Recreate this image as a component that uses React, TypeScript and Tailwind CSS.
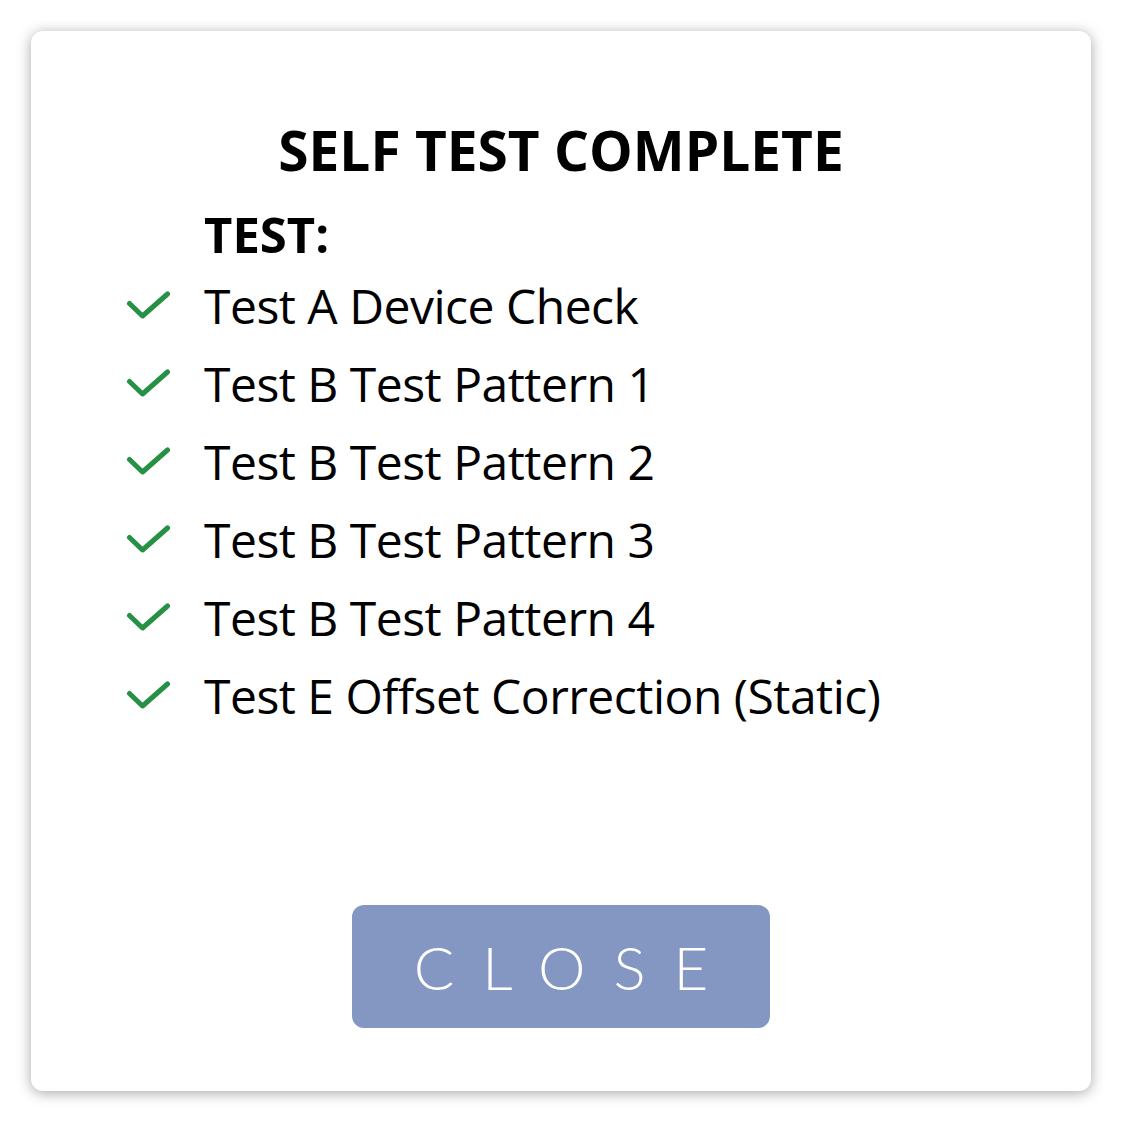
import React from "react";

const tests = [
  "Test A Device Check",
  "Test B Test Pattern 1",
  "Test B Test Pattern 2",
  "Test B Test Pattern 3",
  "Test B Test Pattern 4",
  "Test E Offset Correction (Static)",
];

function Check() {
  return (
    <svg width="46" height="32" viewBox="0 0 46 32" className="shrink-0">
      <path
        d="M3.5 13.5 L16.5 26 L41.5 4"
        fill="none"
        stroke="#269045"
        strokeWidth="5"
        strokeLinecap="round"
        strokeLinejoin="round"
      />
    </svg>
  );
}

export default function App() {
  return (
    <div className="flex h-[1125px] w-[1125px] items-start bg-white p-[31px]">
      <div className="flex h-[1060px] w-[1060px] flex-col rounded-[12px] bg-white pt-[88px] pb-[63px] shadow-[0_2px_14px_rgba(0,0,0,0.35)] [font-family:'Open_Sans','Noto_Sans',sans-serif] text-black">
        <h1 className="text-center text-[55px] font-bold leading-[62px]">SELF TEST COMPLETE</h1>
        <div className="mt-[22px] pl-[173px] text-[49px] font-bold leading-[62px]">TEST:</div>
        <ul className="mt-[2px] pl-[95px]">
          {tests.map((t) => (
            <li key={t} className="flex items-center text-[48px] leading-[78px] tracking-[-0.5px]">
              <Check />
              <span className="ml-[32px]">{t}</span>
            </li>
          ))}
        </ul>
        <button className="mx-auto mt-auto flex h-[123px] w-[418px] items-center justify-center rounded-[12px] bg-[#8497c3] pl-[28px] text-[60px] font-light tracking-[28px] text-white [font-family:Lato,sans-serif]">
          CLOSE
        </button>
      </div>
    </div>
  );
}
